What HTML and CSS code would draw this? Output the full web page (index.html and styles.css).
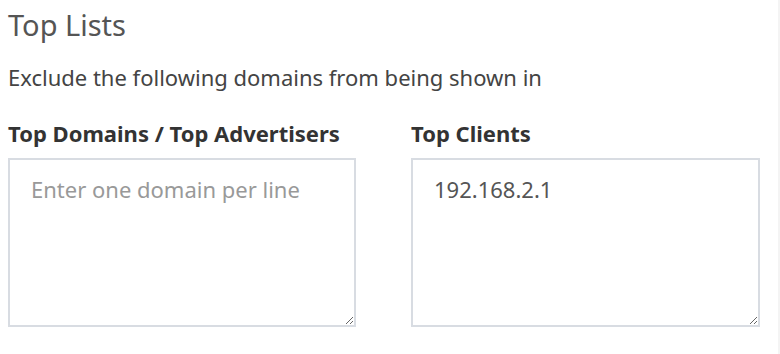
FILE: index.html
```html
<!DOCTYPE html>
<html>
<head>
    <title>Top Lists</title>
    <link rel="stylesheet" href="styles.css">
</head>
<body>
    <div class="box">
        <h1 class="box-title">Top Lists</h1>
        <p class="intro">Exclude the following domains from being shown in</p>
        <div class="row">
            <div class="field">
                <label for="domains">Top Domains / Top Advertisers</label>
                <textarea id="domains" placeholder="Enter one domain per line"></textarea>
            </div>
            <div class="field">
                <label for="clients">Top Clients</label>
                <textarea id="clients">192.168.2.1</textarea>
            </div>
        </div>
    </div>
</body>
</html>
```

FILE: styles.css
```css
body {
    margin: 0;
    background-color: #ffffff;
    font-family: "Noto Sans", "Liberation Sans", sans-serif;
    color: #333333;
}

.box {
    height: 354px;
    box-sizing: border-box;
    padding: 0 20px 0 8px;
    border-right: 2px solid #f4f4f4;
    width: 780px;
}

.box-title {
    margin: 0;
    padding-top: 5px;
    font-size: 29px;
    font-weight: 400;
    line-height: 40px;
    color: #555555;
}

.intro {
    margin: 18px 0 0;
    font-size: 22px;
    line-height: 28px;
    color: #444444;
}

.row {
    display: grid;
    grid-template-columns: 348px 349px;
    column-gap: 55px;
    margin-top: 28px;
}

.field label {
    display: block;
    font-size: 22px;
    font-weight: 700;
    line-height: 28px;
    color: #333333;
}

.field textarea {
    display: block;
    box-sizing: border-box;
    width: 100%;
    height: 169px;
    margin-top: 11px;
    padding: 15px 21px;
    border: 2px solid #d8dce2;
    border-radius: 0;
    font-family: inherit;
    font-size: 22px;
    line-height: 28px;
    color: #555555;
    resize: vertical;
}

.field textarea::placeholder {
    color: #999999;
}
```
